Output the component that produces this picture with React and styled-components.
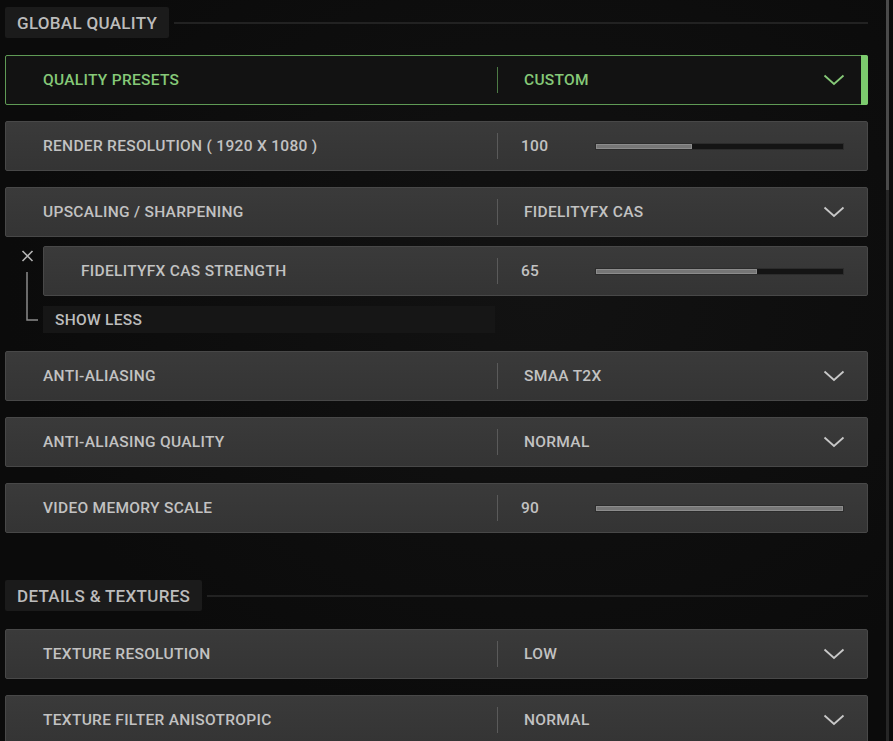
import React from "react";
import styled, { createGlobalStyle, css } from "styled-components";

const Global = createGlobalStyle`
  html, body {
    margin: 0;
    padding: 0;
    background: #0c0c0c;
  }
  body {
    font-family: Roboto, "Liberation Sans", sans-serif;
    overflow: hidden;
  }
`;

const Page = styled.div`
  width: 893px;
  height: 741px;
  display: flex;
  background: radial-gradient(ellipse at 60% 40%, #121212 0%, #0b0b0b 70%);
  overflow: hidden;
`;

const Content = styled.div`
  width: 863px;
  margin-left: 5px;
  padding-top: 7px;
  display: flex;
  flex-direction: column;
`;

const ScrollTrack = styled.div`
  width: 3px;
  margin-left: 18px;
  height: 741px;
  background: #262626;
  display: flex;
  flex-direction: column;
`;

const ScrollThumb = styled.div`
  height: 190px;
  background: #4a4a4a;
`;

const SectionHead = styled.div`
  display: flex;
  align-items: center;
  margin-top: ${(p) => p.$mt || 0}px;
`;

const SectionTitle = styled.div`
  height: 31px;
  padding: 0 12px;
  display: flex;
  align-items: center;
  background: #1b1b1b;
  border-radius: 2px;
  color: #bcbcbc;
  font-size: 17px;
  font-weight: 500;
  letter-spacing: 0.3px;
`;

const SectionLine = styled.div`
  flex: 1;
  height: 2px;
  margin-left: 5px;
  background: #222;
`;

const Row = styled.div`
  height: 50px;
  flex-shrink: 0;
  box-sizing: border-box;
  margin-top: ${(p) => p.$mt}px;
  display: grid;
  grid-template-columns: ${(p) => 491 - (p.$offset || 0)}px 1fr;
  align-items: center;
  position: relative;
  border-radius: 2px;
  border: 1px solid #484848;
  background: linear-gradient(180deg, #3a3a3a 0%, #343434 100%);
  color: #c2c2c2;
  ${(p) =>
    p.$active &&
    css`
      border-color: #5f9a55;
      background: #121212;
      color: #86c978;
    `}
`;

const ActiveBar = styled.div`
  position: absolute;
  right: -1px;
  top: -1px;
  bottom: -1px;
  width: 7px;
  background: #7ccb6e;
  border-radius: 0 2px 2px 0;
`;

const Label = styled.div`
  padding-left: 37px;
  font-size: 15.5px;
  font-weight: 500;
  letter-spacing: 0.3px;
  white-space: nowrap;
`;

const ValueCell = styled.div`
  height: 26px;
  display: flex;
  align-items: center;
  border-left: 1px solid ${(p) => (p.$active ? "#4d7a45" : "#5a5a5a")};
  padding-left: 23px;
  padding-right: 22px;
`;

const Value = styled.div`
  font-size: 15.5px;
  font-weight: 500;
  letter-spacing: 0.3px;
  min-width: 74px;
  padding-left: ${(p) => (p.$num ? 0 : 3)}px;
  box-sizing: border-box;
  white-space: nowrap;
  flex-shrink: 0;
`;

const Track = styled.div`
  width: 249px;
  height: 7px;
  box-sizing: border-box;
  background: #141414;
  border: 1px solid #2c2c2c;
  display: flex;
`;

const Fill = styled.div`
  height: 100%;
  background: #767676;
  box-shadow: inset 0 0 0 1px #8c8c8c;
`;

const Chevron = styled.svg`
  margin-left: auto;
  display: block;
`;

const SubWrap = styled.div`
  display: flex;
  margin-top: 9px;
`;

const Bracket = styled.div`
  width: 38px;
  flex-shrink: 0;
`;

const SubColumn = styled.div`
  flex: 1;
  min-width: 0;
  display: flex;
  flex-direction: column;
`;

const ShowLess = styled.div`
  width: 452px;
  height: 27px;
  margin-top: 10px;
  background: #161616;
  color: #bdbdbd;
  font-size: 15.5px;
  font-weight: 500;
  letter-spacing: 0.3px;
  display: flex;
  align-items: center;
  padding-left: 12px;
  box-sizing: border-box;
`;

const ChevronIcon = ({ color }) => (
  <Chevron width="22" height="12" viewBox="0 0 22 12">
    <path d="M1.5 1.5 L11 10 L20.5 1.5" fill="none" stroke={color} strokeWidth="1.8" />
  </Chevron>
);

const Setting = ({ label, value, slider, mt, offset, active }) => (
  <Row $mt={mt} $offset={offset} $active={active}>
    <Label>{label}</Label>
    <ValueCell $active={active}>
      <Value $num={slider != null}>{value}</Value>
      {slider != null ? (
        <Track>
          <Fill style={{ width: `${slider}%` }} />
        </Track>
      ) : (
        <ChevronIcon color={active ? "#86c978" : "#c8c8c8"} />
      )}
    </ValueCell>
    {active && <ActiveBar />}
  </Row>
);

export default function App() {
  return (
    <>
      <Global />
      <Page>
        <Content>
          <SectionHead>
            <SectionTitle>GLOBAL QUALITY</SectionTitle>
            <SectionLine />
          </SectionHead>
          <Setting mt={17} active label="QUALITY PRESETS" value="CUSTOM" />
          <Setting mt={16} label="RENDER RESOLUTION ( 1920 X 1080 )" value="100" slider={39} />
          <Setting mt={16} label="UPSCALING / SHARPENING" value="FIDELITYFX CAS" />
          <SubWrap>
            <Bracket>
              <svg width="38" height="80" viewBox="0 0 38 80">
                <path d="M17.5 5 L27.5 15 M27.5 5 L17.5 15" stroke="#b5b5b5" strokeWidth="1.6" />
                <path d="M22 26 L22 74 L33 74" fill="none" stroke="#8a8a8a" strokeWidth="1.5" />
              </svg>
            </Bracket>
            <SubColumn>
              <Setting mt={0} offset={38} label="FIDELITYFX CAS STRENGTH" value="65" slider={65} />
              <ShowLess>SHOW LESS</ShowLess>
            </SubColumn>
          </SubWrap>
          <Setting mt={18} label="ANTI-ALIASING" value="SMAA T2X" />
          <Setting mt={16} label="ANTI-ALIASING QUALITY" value="NORMAL" />
          <Setting mt={16} label="VIDEO MEMORY SCALE" value="90" slider={100} />
          <SectionHead $mt={47}>
            <SectionTitle>DETAILS &amp; TEXTURES</SectionTitle>
            <SectionLine />
          </SectionHead>
          <Setting mt={18} label="TEXTURE RESOLUTION" value="LOW" />
          <Setting mt={16} label="TEXTURE FILTER ANISOTROPIC" value="NORMAL" />
        </Content>
        <ScrollTrack>
          <ScrollThumb />
        </ScrollTrack>
      </Page>
    </>
  );
}
